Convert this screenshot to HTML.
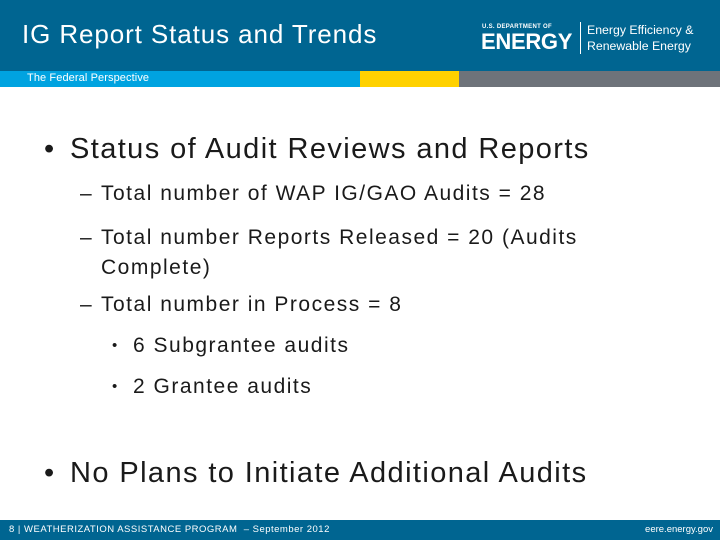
<!DOCTYPE html>
<html><head><meta charset="utf-8"><style>
body{margin:0;width:720px;height:540px;position:relative;background:#fff;font-family:"Liberation Sans",Arial,sans-serif;overflow:hidden}
.hdr{position:absolute;left:0;top:0;width:720px;height:71px;background:#006591}
.t{position:absolute;left:22px;top:19px;color:#fff;font-size:26px;letter-spacing:0.9px}
.b1{position:absolute;top:71px;height:16px;left:0;width:360px;background:#00a3e0}
.b2{position:absolute;top:71px;height:16px;left:360px;width:99px;background:#ffd100}
.b3{position:absolute;top:71px;height:16px;left:459px;width:261px;background:#6e737a}
.fp{position:absolute;left:27px;top:72px;font-size:11px;color:#fff;letter-spacing:0.1px}
.p{position:absolute;color:#1a1a1a;white-space:nowrap}
.big{font-size:29px;letter-spacing:1.4px}
.sm{font-size:21px;letter-spacing:1.5px}
.f{position:absolute;left:0;top:520px;width:720px;height:20px;background:#006591;color:#fff;font-size:9.5px;letter-spacing:0.5px}
</style></head><body>
<div class="hdr"></div>
<div class="t">IG Report Status and Trends</div>
<div style="position:absolute;left:482px;top:24px;color:#fff;font-size:6px;font-weight:bold;letter-spacing:0.3px">U.S. DEPARTMENT OF</div>
<div style="position:absolute;left:481px;top:29px;color:#fff;font-size:22px;font-weight:bold;letter-spacing:-0.3px">ENERGY</div>
<div style="position:absolute;left:580px;top:22px;width:1px;height:32px;background:#fff"></div>
<div style="position:absolute;left:587px;top:22px;color:#fff;font-size:12.3px;line-height:16px">Energy Efficiency &amp;<br>Renewable Energy</div>
<div class="b1"></div><div class="b2"></div><div class="b3"></div>
<div class="fp">The Federal Perspective</div>
<div class="p big" style="left:44px;top:133px"><span style="position:absolute;left:0">•</span><span style="position:absolute;left:26px">Status of Audit Reviews and Reports</span></div>
<div class="p sm" style="left:80px;top:182px"><span style="position:absolute;left:0">–</span><span style="position:absolute;left:21px">Total number of WAP IG/GAO Audits = 28</span></div>
<div class="p sm" style="left:80px;top:223px;line-height:30px"><span style="position:absolute;left:0">–</span><span style="position:absolute;left:21px">Total number Reports Released = 20 (Audits<br>Complete)</span></div>
<div class="p sm" style="left:80px;top:293px"><span style="position:absolute;left:0">–</span><span style="position:absolute;left:21px">Total number in Process = 8</span></div>
<div class="p sm" style="left:112px;top:334px"><span style="position:absolute;left:0;font-size:15px;top:3px">•</span><span style="position:absolute;left:21px">6 Subgrantee audits</span></div>
<div class="p sm" style="left:112px;top:375px"><span style="position:absolute;left:0;font-size:15px;top:3px">•</span><span style="position:absolute;left:21px">2 Grantee audits</span></div>
<div class="p big" style="left:44px;top:457px"><span style="position:absolute;left:0">•</span><span style="position:absolute;left:26px">No Plans to Initiate Additional Audits</span></div>
<div class="f"><span style="position:absolute;left:9px;top:4px">8 | WEATHERIZATION ASSISTANCE PROGRAM &nbsp;– September 2012</span><span style="position:absolute;right:7px;top:4px;letter-spacing:0">eere.energy.gov</span></div>
</body></html>
